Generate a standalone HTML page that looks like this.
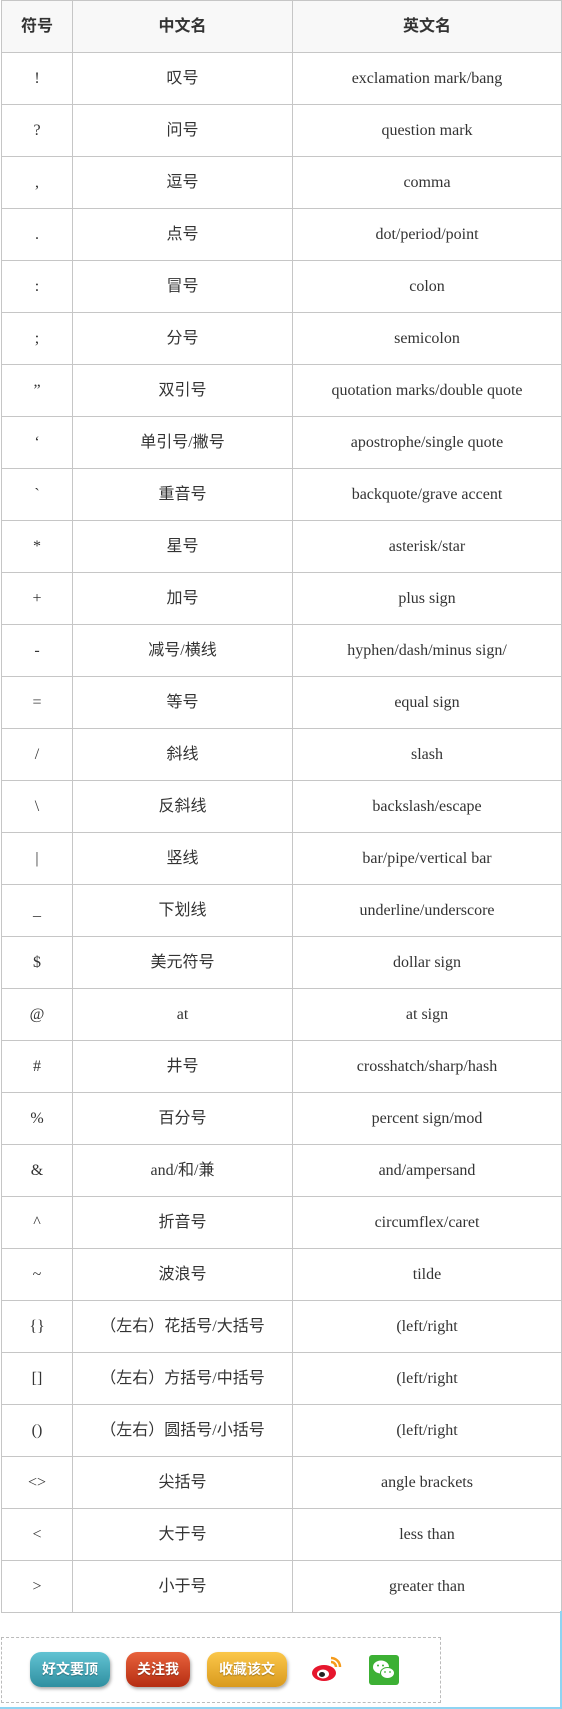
<!DOCTYPE html>
<html><head><meta charset="utf-8"><style>
body{margin:0;width:562px;height:1709px;background:#fff;position:relative;overflow:hidden;font-family:"Liberation Serif","Noto Sans CJK SC",serif;color:#333}
table{position:absolute;left:1px;top:0;width:561px;border-collapse:collapse;table-layout:fixed}
td,th{border:1px solid #c6c6c6;height:51px;padding:0;text-align:center;vertical-align:middle;font-size:16px;line-height:20px}
th{background:#f8f8f8;font-family:"Liberation Sans","Noto Sans CJK SC",sans-serif;font-weight:bold;font-size:16px}
td:nth-child(2){font-family:"Liberation Serif","Noto Sans CJK SC",serif;font-size:16px}
.box{position:absolute;left:1px;top:1637px;width:438px;height:64px;border:1px dashed #bbb}
.b{position:absolute;top:14px;height:35px;border-radius:11px;color:#fff;font:bold 14px "Noto Sans CJK SC",sans-serif;line-height:35px;text-align:center;box-shadow:1px 2px 3px #aaa;text-shadow:0 1px 1px rgba(0,0,0,.3)}
.rb{position:absolute;right:0;top:1611px;width:2px;height:98px;background:#8fd4f2}
.bb{position:absolute;left:0;bottom:0;width:562px;height:2px;background:#8fd4f2}
</style></head><body>
<table>
<colgroup><col style="width:71px"><col style="width:220px"><col></colgroup>
<tr><th>符号</th><th>中文名</th><th>英文名</th></tr>
<tr><td>!</td><td>叹号</td><td>exclamation mark/bang</td></tr>
<tr><td>?</td><td>问号</td><td>question mark</td></tr>
<tr><td>,</td><td>逗号</td><td>comma</td></tr>
<tr><td>.</td><td>点号</td><td>dot/period/point</td></tr>
<tr><td>:</td><td>冒号</td><td>colon</td></tr>
<tr><td>;</td><td>分号</td><td>semicolon</td></tr>
<tr><td>”</td><td>双引号</td><td>quotation marks/double quote</td></tr>
<tr><td>‘</td><td>单引号/撇号</td><td>apostrophe/single quote</td></tr>
<tr><td>`</td><td>重音号</td><td>backquote/grave accent</td></tr>
<tr><td>*</td><td>星号</td><td>asterisk/star</td></tr>
<tr><td>+</td><td>加号</td><td>plus sign</td></tr>
<tr><td>-</td><td>减号/横线</td><td>hyphen/dash/minus sign/</td></tr>
<tr><td>=</td><td>等号</td><td>equal sign</td></tr>
<tr><td>/</td><td>斜线</td><td>slash</td></tr>
<tr><td>\</td><td>反斜线</td><td>backslash/escape</td></tr>
<tr><td>|</td><td>竖线</td><td>bar/pipe/vertical bar</td></tr>
<tr><td>_</td><td>下划线</td><td>underline/underscore</td></tr>
<tr><td>$</td><td>美元符号</td><td>dollar sign</td></tr>
<tr><td>@</td><td>at</td><td>at sign</td></tr>
<tr><td>#</td><td>井号</td><td>crosshatch/sharp/hash</td></tr>
<tr><td>%</td><td>百分号</td><td>percent sign/mod</td></tr>
<tr><td>&amp;</td><td>and/和/兼</td><td>and/ampersand</td></tr>
<tr><td>^</td><td>折音号</td><td>circumflex/caret</td></tr>
<tr><td>~</td><td>波浪号</td><td>tilde</td></tr>
<tr><td>{}</td><td>（左右）花括号/大括号</td><td>(left/right</td></tr>
<tr><td>[]</td><td>（左右）方括号/中括号</td><td>(left/right</td></tr>
<tr><td>()</td><td>（左右）圆括号/小括号</td><td>(left/right</td></tr>
<tr><td>&lt;&gt;</td><td>尖括号</td><td>angle brackets</td></tr>
<tr><td>&lt;</td><td>大于号</td><td>less than</td></tr>
<tr><td>&gt;</td><td>小于号</td><td>greater than</td></tr>
</table>
<div class="box">
<div class="b" style="left:28px;width:80px;background:linear-gradient(#62c3d3,#2f8fa0)">好文要顶</div>
<div class="b" style="left:124px;width:64px;background:linear-gradient(#e8623c,#b52d12)">关注我</div>
<div class="b" style="left:205px;width:80px;background:linear-gradient(#fbc74a,#d99a1e)">收藏该文</div>
<svg style="position:absolute;left:309px;top:17px" width="32" height="28" viewBox="0 0 32 28"><ellipse cx="13" cy="18" rx="12" ry="8" fill="#e6162d"/><ellipse cx="12" cy="19" rx="6" ry="4.5" fill="#fff"/><ellipse cx="11" cy="19.5" rx="3" ry="2.5" fill="#222"/><path d="M20 3a9 9 0 0 1 9 9" stroke="#f59b1b" stroke-width="2.5" fill="none"/><path d="M20 7a5 5 0 0 1 5 5" stroke="#f59b1b" stroke-width="2.5" fill="none"/></svg>
<svg style="position:absolute;left:367px;top:17px" width="30" height="30" viewBox="0 0 30 30"><rect width="30" height="30" rx="3" fill="#3cb034"/><ellipse cx="12" cy="12" rx="8" ry="6.5" fill="#fff"/><ellipse cx="18.5" cy="18" rx="7" ry="5.5" fill="#fff" stroke="#3cb034" stroke-width="1"/><circle cx="9" cy="10.5" r="1" fill="#3cb034"/><circle cx="14" cy="10.5" r="1" fill="#3cb034"/><circle cx="16" cy="17" r="0.9" fill="#3cb034"/><circle cx="21" cy="17" r="0.9" fill="#3cb034"/></svg>
</div>
<div class="rb"></div><div class="bb"></div>
</body></html>
